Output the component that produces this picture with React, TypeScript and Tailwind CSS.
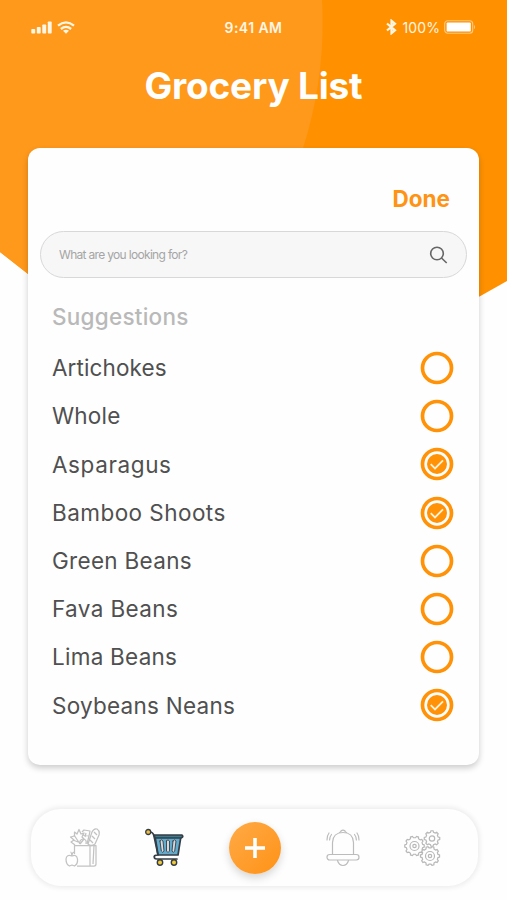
import { useState } from 'react'

const suggestions = [
  { name: 'Artichokes', checked: false, tracking: 'tracking-[0.1px]' },
  { name: 'Whole', checked: false, tracking: 'tracking-[0.2px]' },
  { name: 'Asparagus', checked: true, tracking: 'tracking-[0.6px]' },
  { name: 'Bamboo Shoots', checked: true, tracking: 'tracking-[0.45px]' },
  { name: 'Green Beans', checked: false, tracking: 'tracking-[0.3px]' },
  { name: 'Fava Beans', checked: false, tracking: 'tracking-[0.38px]' },
  { name: 'Lima Beans', checked: false, tracking: 'tracking-[0.25px]' },
  { name: 'Soybeans Neans', checked: true, tracking: 'tracking-[0.25px]' },
]

function HeaderBackground() {
  return (
    <svg className="absolute left-0 top-0 h-[300px] w-full" viewBox="0 0 507 300" aria-hidden="true">
      <path d="M0 0H507V281L445 316H82L0 252Z" fill="#ff9100" />
      <path d="M0 0H322Q326 76 303 148L240 300H61L0 252Z" fill="#ff991c" />
    </svg>
  )
}

function StatusBar() {
  return (
    <div className="grid h-[54px] grid-cols-3 items-center px-[31px] text-[13px] text-[#fff6e4]">
      <div className="flex items-center gap-1">
        <svg width="22" height="14" viewBox="0 0 22 14" fill="currentColor" aria-hidden="true">
          <rect x="0.3" y="9" width="3.9" height="4.5" rx="0.8" />
          <rect x="5.8" y="7" width="3.9" height="6.5" rx="0.8" />
          <rect x="11.3" y="4.5" width="3.9" height="9" rx="0.8" />
          <rect x="16.8" y="1.5" width="3.9" height="12" rx="0.8" />
        </svg>
        <svg width="18" height="13" viewBox="0 0 18 13" fill="none" stroke="currentColor" strokeWidth="2.3" aria-hidden="true">
          <path d="M1 4.7Q9-1.9 17 4.7" />
          <path d="M3.9 8Q9 3.8 14.1 8" />
          <path d="M6 9.8Q9 7.7 12 9.8L9 12.8Z" fill="currentColor" stroke="none" />
        </svg>
      </div>
      <div className="whitespace-nowrap text-center text-[14px] font-semibold tracking-[0.45px]">9:41 AM</div>
      <div className="flex items-center justify-end">
        <svg width="11" height="16" viewBox="0 0 11 16" fill="none" stroke="currentColor" strokeWidth="2.2" aria-hidden="true">
          <path d="M1 4.5L9 11.2L5.5 14.2V1.8L9 4.8L1 11.5" />
        </svg>
        <span className="ml-[5px] text-[14px] tracking-[0.1px]">100%</span>
        <svg className="ml-1" width="32" height="14" viewBox="0 0 32 14" aria-hidden="true">
          <rect x="0.7" y="0.7" width="28" height="12.6" rx="3" fill="none" stroke="#ffc983" strokeWidth="1.1" />
          <rect x="2.6" y="2.4" width="24.2" height="9.2" rx="1.2" fill="#fff" />
          <path d="M30 4.7Q32 7 30 9.3Z" fill="#ffc983" />
        </svg>
      </div>
    </div>
  )
}

function CheckCircle({ checked }: { checked: boolean }) {
  return (
    <svg width="34" height="34" viewBox="0 0 34 34" fill="none" aria-hidden="true">
      <circle cx="17" cy="17" r="14.5" stroke="#ff9207" strokeWidth="3.7" />
      {checked && (
        <>
          <circle cx="17" cy="17" r="10" fill="#ff9207" />
          <path d="M10.7 17.2L15 21.5L23 13.3" stroke="#fff3dc" strokeWidth="1.8" />
        </>
      )}
    </svg>
  )
}

function GroceryIcon() {
  return (
    <svg width="36" height="40" viewBox="0 0 36 40" fill="none" stroke="#c2c2c2" strokeWidth="1.25" strokeLinejoin="round" aria-hidden="true">
      <path d="M9.5 26V17.5H31V36Q31 38 29 38H12" />
      <path d="M25 17.5V38M28 36L29 17.5" />
      <path d="M10 17L6 14L9 12L5.5 9L9.5 8L9.5 4L12 6L14 1.5L16 6L19 5L17 9L19 11L15 16" />
      <path d="M9 7L15 16M8 12L13 14M15 16Q14 12 18 11Q22 11 21 16" />
      <path d="M17 4L19 2L25 3L24 8L17 7M21 5L20 9M24 8L22 16" />
      <path d="M23 16L27 4Q29 0 32 1Q35 3 34 7L30 16Q26 19 23 16ZM27 8L30 11M29 4L32 7M25 12L28 15" />
      <path d="M7 28Q1.5 26 1 31Q1 36.5 4.5 38L7 37L9.5 38Q13 36 12.5 31Q11.5 26 7 28ZM7 28Q6.5 24 5.5 24M7 27Q7 24 10 24" fill="#fff" />
    </svg>
  )
}

function CartIcon() {
  return (
    <svg width="40" height="40" viewBox="0 0 40 40" fill="none" stroke="#343d46" strokeWidth="1.7" strokeLinecap="round" strokeLinejoin="round" aria-hidden="true">
      <path d="M10 8H36L33 27H13Z" fill="#62abcc" />
      <path d="M15 13L16.3 23Q18 26 19 23L18 13Q16.5 10.5 15 13ZM21.5 13V23Q23 26 24.5 23V13Q23 10.5 21.5 13ZM28 13L27 23Q28.3 26 29.7 23L31 13Q29.6 10.5 28 13Z" fill="#d5d8de" strokeWidth="0.9" />
      <path d="M5 4Q8 4 9 8L13 27Q8 27 9.5 30Q10 31 12 31H32" />
      <path d="M9 7H37Q39 9 36 10H10Z" fill="#397d91" />
      <circle cx="3.2" cy="4" r="2.5" fill="#f2bf3c" strokeWidth="1.3" />
      <circle cx="15" cy="34.5" r="2.7" fill="#f2ca38" strokeWidth="1.4" />
      <circle cx="29" cy="34.5" r="2.7" fill="#f2ca38" strokeWidth="1.4" />
    </svg>
  )
}

function BellIcon() {
  return (
    <svg width="34" height="38" viewBox="0 0 34 38" fill="none" stroke="#bcbcbc" strokeWidth="1.2" strokeLinecap="round" aria-hidden="true">
      <path d="M6.5 25.5V13.5Q7 3.5 17 3.5Q27 3.5 27.5 13.5V25.5" />
      <path d="M13.5 3.5Q15 3 15 2Q17 0 19 2Q19 3 20.5 3.5" />
      <rect x="1" y="25.5" width="32" height="5.5" rx="2.7" />
      <path d="M11.5 31.5Q13 36.5 17 36.5Q21 36.5 22.5 31.5" />
      <path d="M3 4Q0.8 7 1 11M5.5 5.5Q3.5 8 3.6 11M31 4Q33.2 7 33 11M28.5 5.5Q30.5 8 30.4 11" />
    </svg>
  )
}

const gearPath = (cx: number, cy: number, r: number, teeth: number) => {
  const points: string[] = []
  for (let i = 0; i < teeth; i++) {
    const steps = [[-0.31, r - 1.5], [-0.17, r], [0.17, r], [0.31, r - 1.5]]
    steps.forEach(([offset, radius]) => {
      const angle = ((i + offset) / teeth) * Math.PI * 2
      points.push(`${(cx + Math.cos(angle) * radius).toFixed(2)} ${(cy + Math.sin(angle) * radius).toFixed(2)}`)
    })
  }
  return `M${points.join('L')}Z`
}

function GearsIcon() {
  return (
    <svg width="37" height="36" viewBox="0 0 37 36" fill="none" stroke="#b8b8b8" strokeWidth="1.2" aria-hidden="true">
      <path d={gearPath(10.5, 16, 9.8, 10)} />
      <circle cx="10.5" cy="16" r="4.5" />
      <circle cx="10.5" cy="16" r="1.7" />
      <path d={gearPath(28, 8.5, 7.8, 8)} />
      <circle cx="28" cy="8.5" r="2.7" />
      <path d={gearPath(26, 26, 9.6, 10)} fill="#fff" />
      <circle cx="26" cy="26" r="4.5" />
      <circle cx="26" cy="26" r="1.7" />
    </svg>
  )
}

export default function App() {
  const [items, setItems] = useState(suggestions)

  const toggleItem = (name: string) => {
    setItems(items.map((item) => item.name === name ? { ...item, checked: !item.checked } : item))
  }

  return (
    <div className="relative h-[900px] w-full overflow-hidden bg-[#fefefe] font-['Inter',sans-serif]">
      <HeaderBackground />
      <div className="relative flex h-full flex-col">
        <StatusBar />
        <h1 className="h-[94px] text-center text-[37px] font-bold leading-[64px] tracking-[-0.2px] text-white">Grocery List</h1>
        <main className="mx-7 h-[617px] rounded-xl bg-[#fefefe] px-3 pt-8 shadow-[0_3px_6px_rgba(0,0,0,0.2)]">
          <div className="flex h-[51px] justify-end pr-[17px]">
            <button className="h-[38px] text-[22.5px] font-bold text-[#ff9314]">Done</button>
          </div>
          <div className="flex h-[47px] items-center rounded-full border-[1.5px] border-[#d8d8d8] bg-[#f7f7f7] pl-[18px] pr-[18px]">
            <input className="min-w-0 flex-1 bg-transparent text-[12px] tracking-[-0.68px] outline-none placeholder:text-[#a5a5a5]" placeholder="What are you looking for?" />
            <svg width="20" height="20" viewBox="0 0 20 20" fill="none" stroke="#666" strokeWidth="1.6" aria-label="Search">
              <circle cx="9" cy="8.5" r="6.3" />
              <path d="M13.5 13L18.7 18" />
            </svg>
          </div>
          <h2 className="pl-3 pt-[23px] text-[22.5px] font-medium leading-8 tracking-[0.25px] text-[#b9b9b9]">Suggestions</h2>
          <ul className="pl-3 pr-[13px] pt-[11px]">
            {items.map((item) => (
              <li key={item.name} className="flex h-[48.2px] items-center justify-between text-[22.5px] text-[#505050]">
                <span className={item.tracking}>{item.name}</span>
                <button aria-label={item.name} onClick={() => toggleItem(item.name)}>
                  <CheckCircle checked={item.checked} />
                </button>
              </li>
            ))}
          </ul>
        </main>
        <nav className="ml-[31px] mr-[29px] mt-11 flex h-[77px] items-center rounded-[30px] bg-[#fefefe] pl-[34px] pr-[37px] shadow-[0_0_5px_2px_rgba(0,0,0,0.07)]">
          <button aria-label="Groceries"><GroceryIcon /></button>
          <button className="ml-[44px]" aria-label="Cart"><CartIcon /></button>
          <button className="ml-[44px] flex size-[52px] items-center justify-center rounded-full bg-linear-to-br from-[#ffaa43] to-[#ff9210] shadow-[0_4px_9px_rgba(0,0,0,0.16)]" aria-label="Add">
            <svg width="20" height="20" viewBox="0 0 20 20" stroke="white" strokeWidth="3.6" aria-hidden="true">
              <path d="M10 0V20M0 10H20" />
            </svg>
          </button>
          <button className="ml-[45px]" aria-label="Notifications"><BellIcon /></button>
          <button className="ml-auto" aria-label="Settings"><GearsIcon /></button>
        </nav>
      </div>
    </div>
  )
}
